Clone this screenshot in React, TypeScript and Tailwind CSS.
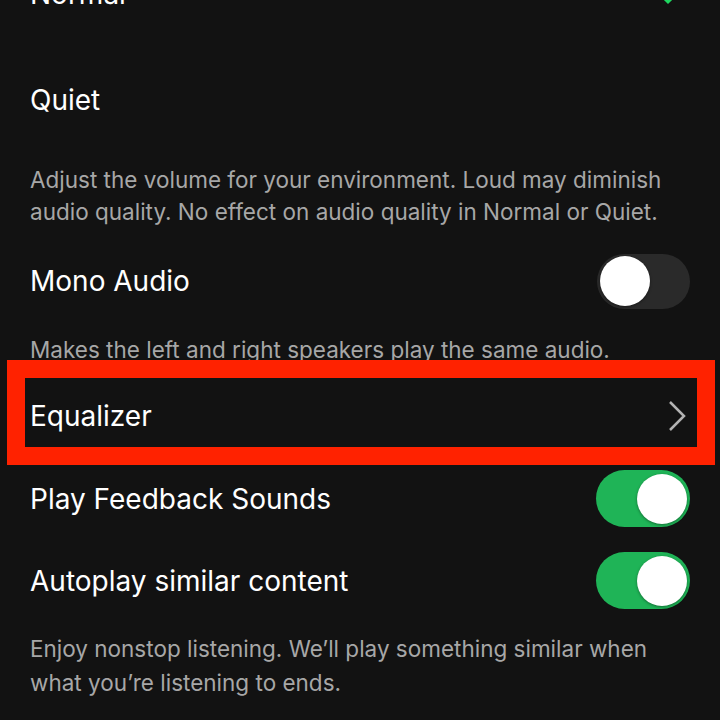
import React from "react";

function Toggle({ on }: { on: boolean }) {
  return (
    <div
      className={
        on
          ? "w-[94px] h-[57px] rounded-full bg-[#1fb457] flex items-center justify-end pr-[3px]"
          : "w-[93px] h-[55px] rounded-full bg-[#2a2a2a] flex items-center justify-start pl-[3px]"
      }
    >
      <div className="w-[50px] h-[50px] rounded-full bg-white shadow-[0_1px_3px_rgba(0,0,0,0.4)]" />
    </div>
  );
}

export default function App() {
  return (
    <div
      className="w-[720px] h-[720px] overflow-hidden bg-[#121212] text-white"
      style={{ fontFamily: "Inter, 'Noto Sans', sans-serif" }}
    >
      <div className="flex flex-col">
        {/* Normal row (cut off) */}
        <div className="-mt-[36px] h-[60px] flex items-center justify-between pl-[30px] pr-[41px]">
          <span className="text-[28px] text-white">Normal</span>
          <svg width="18" height="14" viewBox="0 0 18 14" className="mt-[8px]">
            <path d="M2 6 L7 11 L16 2" stroke="#1ed760" strokeWidth="3" fill="none" />
          </svg>
        </div>
        {/* Quiet */}
        <div className="mt-[46px] h-[60px] flex items-center pl-[30px]">
          <span className="text-[28px] text-white">Quiet</span>
        </div>
        {/* Description */}
        <p className="mt-[34px] pl-[30px] pr-[28px] text-[22.5px] leading-[32px] text-[#a7a7a7]">
          Adjust the volume for your environment. Loud may diminish audio quality. No effect on audio quality in Normal or Quiet.
        </p>
        {/* Mono Audio */}
        <div className="mt-[22px] h-[62px] flex items-center justify-between pl-[30px] pr-[30px]">
          <span className="text-[28px] text-white">Mono Audio</span>
          <Toggle on={false} />
        </div>
        <p className="mt-[22px] px-[30px] text-[22.5px] leading-[32px] text-[#a7a7a7] whitespace-nowrap">
          Makes the left and right speakers play the same audio.
        </p>
        {/* Equalizer highlighted */}
        <div className="relative z-10 -mt-[6px] ml-[7px] w-[708px] h-[105px] border-[18px] border-[#ff2200] bg-[#121212] flex items-center justify-between pl-[5px] pr-[11px] pt-[6px]">
          <span className="text-[28px] text-white">Equalizer</span>
          <svg width="18" height="30" viewBox="0 0 18 30">
            <path d="M2 1 L16 15 L2 29" stroke="#b3b3b3" strokeWidth="2.5" fill="none" />
          </svg>
        </div>
        {/* Play Feedback Sounds */}
        <div className="mt-[5px] h-[57px] flex items-center justify-between pl-[30px] pr-[30px]">
          <span className="text-[28px] text-white">Play Feedback Sounds</span>
          <Toggle on={true} />
        </div>
        {/* Autoplay */}
        <div className="mt-[25px] h-[57px] flex items-center justify-between pl-[30px] pr-[30px]">
          <span className="text-[28px] text-white">Autoplay similar content</span>
          <Toggle on={true} />
        </div>
        <p className="mt-[23px] pl-[30px] pr-[28px] text-[22.5px] leading-[34px] text-[#a7a7a7]">
          Enjoy nonstop listening. We’ll play something similar when what you’re listening to ends.
        </p>
      </div>
    </div>
  );
}
